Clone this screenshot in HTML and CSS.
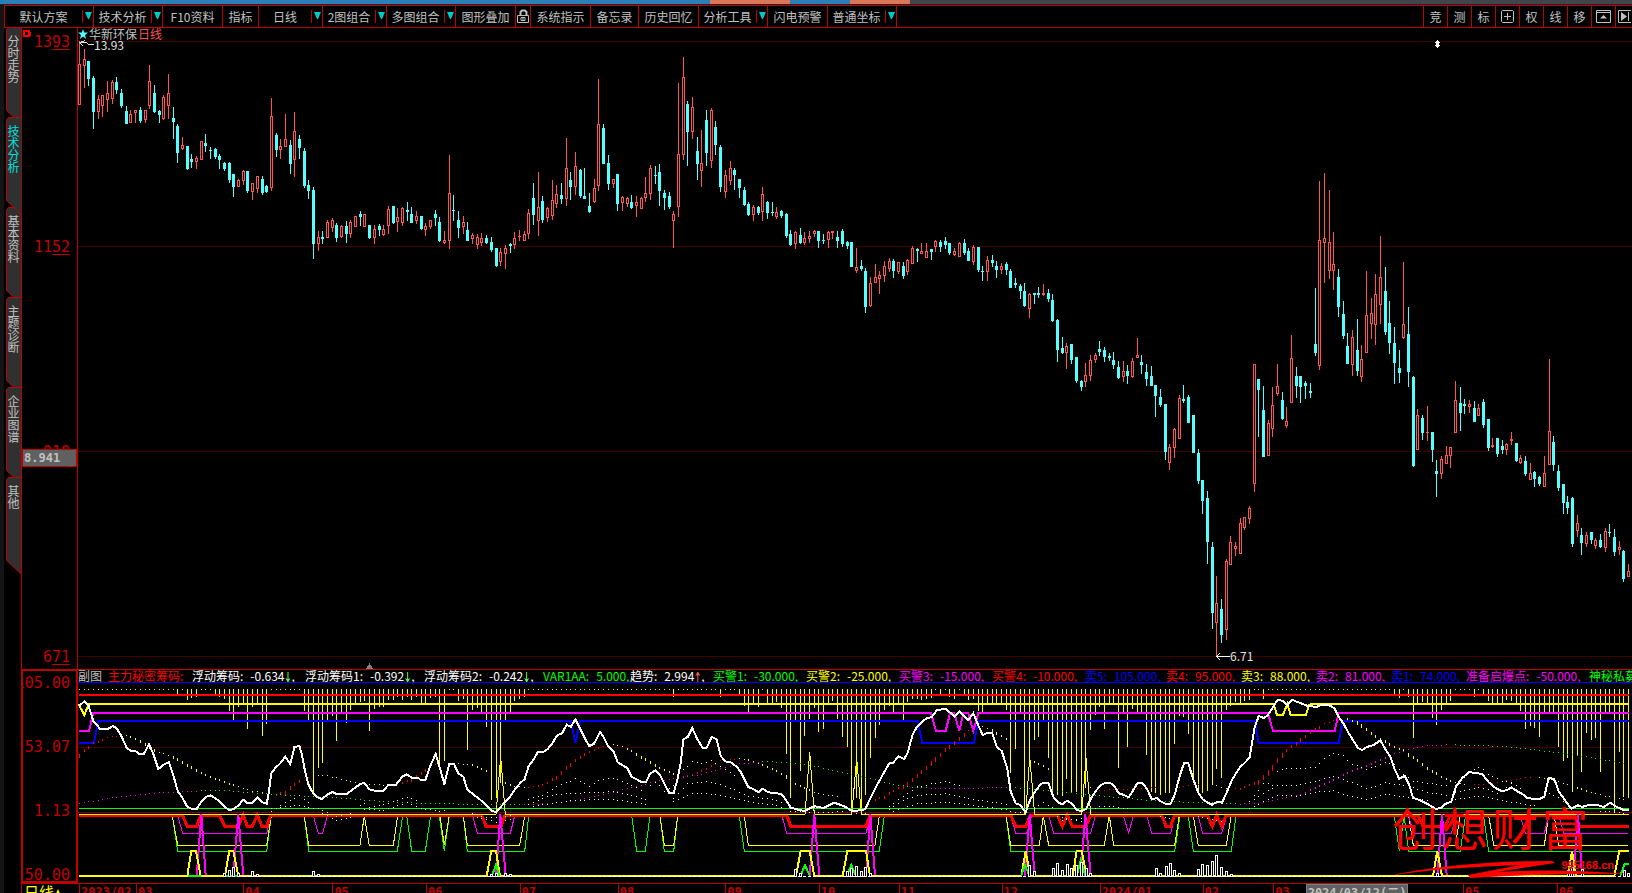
FILE: index.html
```html
<!DOCTYPE html>
<html lang="zh-CN">
<head>
<meta charset="utf-8">
<title>华新环保 日线</title>
<link rel="stylesheet" href="styles.css">
</head>
<body>
<div class="strip"><i class="blue s710"></i><i class="coral s80"></i><i class="blue s60"></i><i class="coral s60"></i><i class="slate"></i></div>
<div class="app">
  <nav class="toolbar" aria-label="工具栏">
    <button class="w89"><span>默认方案</span><i class="caret"></i></button>
    <button class="w69"><span>技术分析</span><i class="caret"></i></button>
    <button class="w60"><span>F10资料</span></button>
    <button class="w36"><span>指标</span></button>
    <button class="w64"><span>日线</span><i class="caret"></i></button>
    <button class="w64"><span>2图组合</span><i class="caret"></i></button>
    <button class="w69"><span>多图组合</span><i class="caret"></i></button>
    <button class="w60"><span>图形叠加</span></button>
    <button class="w15" aria-label="锁定"><svg width="12" height="15" viewBox="0 0 12 15" fill="none" stroke="#c0c0c0"><path d="M3.5 6V3L5 1.500H8L9.500 3V6.500" stroke-width="2"/><path d="M.5 6.500H11.500V13.500H.5z M4 8.500H8V11.500H4z M6 9V11"/></svg></button>
    <button class="w60"><span>系统指示</span></button>
    <button class="w48"><span>备忘录</span></button>
    <button class="w60"><span>历史回忆</span></button>
    <button class="w69"><span>分析工具</span><i class="caret"></i></button>
    <button class="w60"><span>闪电预警</span></button>
    <button class="w69"><span>普通坐标</span><i class="caret"></i></button>
    <span class="spacer"></span>
    <button class="w24"><span>竞</span></button>
    <button class="w24"><span>测</span></button>
    <button class="w24"><span>标</span></button>
    <button class="w24" aria-label="网格"><svg width="13" height="13" viewBox="0 0 13 13" fill="none" stroke="#c0c0c0"><path d="M1.500.5H11.500L12.500 1.500V11.500L11.500 12.500H1.500L.5 11.500V1.500z M6.500 3V10 M3 6.500H10"/></svg></button>
    <button class="w24"><span>权</span></button>
    <button class="w24"><span>线</span></button>
    <button class="w24"><span>移</span></button>
    <button class="w24" aria-label="收起"><svg width="15" height="13" viewBox="0 0 15 13" fill="none" stroke="#c0c0c0"><path d="M.5.5H14.500V12.500H.5z M1 2.500H14"/><path d="M4 8.500L7.500 5L11 8.500z" fill="#c0c0c0" stroke="none"/></svg></button>
    <button class="w16" aria-label="下一页"><svg width="13" height="13" viewBox="0 0 13 13" fill="none" stroke="#c0c0c0"><path d="M13 .5H.5V12.500H13 M10.500 2V11"/><path d="M3 2V11L9 6.500z" fill="#c0c0c0" stroke="none"/></svg></button>
  </nav>
  <main class="desk">
    <nav class="tabs" aria-label="页面">
      <button><span>分时走势</span></button>
      <button class="active"><span>技术分析</span></button>
      <button><span>基本资料</span></button>
      <button><span>主题诊断</span></button>
      <button><span>企业图谱</span></button>
      <button><span>其他</span></button>
    </nav>
    <div class="axis price-axis">
      <svg class="pin" width="9" height="9" viewBox="0 0 9 9"><path d="M0 0H7V2H8V6H7V7H0zM2 2V5H5V2z" fill="#f00" fill-rule="evenodd"/></svg>
      <span>13<u>93</u></span><span>11<u>52</u></span><span>918</span><span>6<u>71</u></span>
      <strong class="marker">8.941</strong>
    </div>
    <section class="price" aria-label="K线图">
      <svg id="price" viewBox="78 28 1554 641" preserveAspectRatio="none" shape-rendering="crispEdges"></svg>
      <h1><svg width="10" height="10" viewBox="0 0 10 10"><path d="M5 0L6.200 3.600H10L7 5.900L8.100 10L5 7.500L1.900 10L3 5.900L0 3.600H3.800z" fill="#54ffff"/></svg>华新环保<b>日线</b></h1>
    </section>
    <div class="axis ind-axis"><span>105.00</span><span>53.07</span><span>1.13</span><span>-50.00</span></div>
    <section class="indicator" aria-label="副图">
      <div class="legend">
        <span class="gray">副图</span><span class="red">主力秘密筹码:</span>
        <span>浮动筹码:<em>-0.634</em><i class="down"></i>,</span>
        <span>浮动筹码1:<em>-0.392</em><i class="down"></i>,</span>
        <span>浮动筹码2:<em>-0.242</em><i class="down"></i>,</span>
        <span class="green">VAR1AA:<em>5.000,</em></span>
        <span>趋势:<em>2.994</em><i class="up"></i>,</span>
        <span class="green">买警1:<em>-30.000,</em></span>
        <span class="yellow">买警2:<em>-25.000,</em></span>
        <span class="magenta">买警3:<em>-15.000,</em></span>
        <span class="red">买警4:<em>-10.000,</em></span>
        <span class="navy">卖5:<em>105.000,</em></span>
        <span class="red">卖4:<em>95.000,</em></span>
        <span class="yellow">卖3:<em>88.000,</em></span>
        <span class="magenta">卖2:<em>81.000,</em></span>
        <span class="navy">卖1:<em>74.000,</em></span>
        <span class="magenta">准备启爆点:<em>-50.000,</em></span>
        <span class="green">神秘私募</span>
      </div>
      <svg id="indicator" viewBox="78 682 1554 201" preserveAspectRatio="none" shape-rendering="crispEdges"></svg>
      <div class="brand"><div class="name"><span>创</span><span>想</span><span>财</span><span>富</span></div>
        <svg viewBox="0 0 240 18" width="240" height="18"><path d="M0 15Q70 1 160 1L163 3L105 12Q170 8 236 14Q160 13 78 18L76 15L128 5Q60 7 0 15z" fill="#f00"/></svg>
        <small>995168.cn</small></div>
    </section>
    <div class="period">日线<svg width="8" height="9" viewBox="0 0 8 9"><path d="M4 0L8 9H0z" fill="#ff0"/></svg></div>
    <div class="dates"><div id="months" class="months"></div><strong class="cursor">2024/03/12(二)</strong></div>
  </main>
</div>
<script src="chart.js"></script>
</body>
</html>
```

FILE: styles.css
```css
* { box-sizing: border-box; }
body {
  margin: 0;
  height: 100vh;
  overflow: hidden;
  display: flex;
  flex-direction: column;
  background: #000;
  color: #c0c0c0;
  font: 12px/12px "Noto Sans CJK SC", sans-serif;
}
button {
  margin: 0;
  padding: 0;
  border: 0;
  background: none;
  color: inherit;
  font: inherit;
}
em, i { font-style: normal; }

.strip { display: flex; height: 5px; border-bottom: 1px solid #202428; }
.blue { background: #2980b9; }
.coral { background: #d87858; }
.slate { background: #40444c; flex: 1; }
.s710 { width: 710px; }
.s80 { width: 80px; }
.s60 { width: 60px; }

.app {
  flex: 1;
  min-height: 0;
  display: flex;
  flex-direction: column;
  border-left: 4px solid #141414;
}

.toolbar {
  display: flex;
  height: 23px;
  border: solid #c00000;
  border-width: 1px 0 1px 1px;
}
.toolbar button {
  display: flex;
  align-items: center;
  justify-content: center;
  flex: none;
  border-right: 1px solid #c00000;
}
.toolbar button span { flex: 1; text-align: center; white-space: nowrap; }
.toolbar button:last-child { border-right: 0; }
.spacer { flex: 1; border-right: 1px solid #c00000; }
.w15 { width: 15px; }
.w16 { width: 16px; }
.w24 { width: 24px; }
.w36 { width: 36px; }
.w48 { width: 48px; }
.w60 { width: 60px; }
.w64 { width: 64px; }
.w69 { width: 69px; }
.w89 { width: 89px; }
.caret {
  width: 11px;
  height: 13px;
  border-left: 1px solid #c00000;
  background: #00c8c8;
  background-clip: content-box;
  padding: 2px 1px 4px 2px;
  clip-path: polygon(0 0, 1px 0, 1px 13px, 0 13px, 0 0, 3px 2px, 10px 2px, 7px 9px, 6px 9px, 3px 2px);
}

.desk {
  flex: 1;
  min-height: 0;
  display: grid;
  grid-template-columns: 17px 57px minmax(0, 1fr);
  grid-template-rows: minmax(0, 1fr) 214px 10px;
}

.tabs {
  grid-row: 1 / 4;
  display: flex;
  flex-direction: column;
  margin-top: -1px;
  padding-left: 2px;
}
.tabs button {
  position: relative;
  height: 90px;
  display: flex;
  justify-content: center;
  padding-top: 8px;
}
.tabs button.active { z-index: 1; color: #00e0e0; }
.tabs button span { position: relative; width: 12px; }
.tabs button svg { position: absolute; left: 0; top: 0; }

.axis {
  position: relative;
  display: flex;
  flex-direction: column;
  justify-content: space-between;
  align-items: flex-end;
  overflow: hidden;
  color: #c00000;
  font: 15px/20px "DejaVu Sans Mono", monospace;
}
.axis u { text-underline-offset: 2px; text-decoration-thickness: 1px; }
.price-axis { border: solid #c00000; border-width: 0 1px; padding: 4px 7px 2px; }
.price-axis .pin { position: absolute; left: 1px; top: 2px; }
.price-axis .marker {
  position: absolute;
  left: 0;
  right: 0;
  top: calc(66% - 2px);
  height: 18px;
  padding-left: 1px;
  border: 1px solid #c00000;
  background: #606060;
  color: #c0c0c0;
  font-size: 12px;
  line-height: 16px;
}
.ind-axis { border: 2px solid #c00000; padding: 6px 6px 0 0; line-height: 12px; }

.price { position: relative; }
.price > svg, .indicator > svg { display: block; width: 100%; height: 100%; }
.price h1 {
  position: absolute;
  left: 0;
  top: 0;
  margin: 0;
  display: flex;
  align-items: center;
  gap: 1px;
  font: 12px/12px "Noto Sans CJK SC", sans-serif;
}
.price h1 b { font-weight: normal; color: #ff5454; }
.note { font: 12px "Noto Sans CJK SC", sans-serif; fill: #e0e0e0; }

.indicator {
  position: relative;
  border-top: 1px solid #c00000;
  display: grid;
  grid-template-columns: minmax(0, 1fr);
  grid-template-rows: 12px minmax(0, 1fr);
}
.legend {
  display: grid;
  grid-template-columns: 30px 84px 113px 119px 119px 87px 83px 93px 93px 93px 93px 81px 75px 75px 75px 75px 123px auto;
  overflow-x: clip;
  white-space: nowrap;
  color: #fff;
}
.legend em { margin-left: 7px; }
.gray { color: #c0c0c0; }
.red { color: #f00; }
.green { color: #0f0; }
.yellow { color: #ff0; }
.magenta { color: #f0f; }
.navy { color: #00f; }
.up, .down {
  display: inline-block;
  width: 5px;
  height: 10px;
  margin: 0 1px;
  vertical-align: -1px;
  background: #ff5454;
  clip-path: polygon(0 4px, 2px 0, 3px 0, 5px 4px, 3px 3px, 3px 10px, 2px 10px, 2px 3px);
}
.down {
  background: #54ff54;
  clip-path: polygon(0 6px, 2px 10px, 3px 10px, 5px 6px, 3px 7px, 3px 0, 2px 0, 2px 7px);
}

.brand {
  position: absolute;
  right: 0;
  bottom: 0;
  width: 240px;
  height: 88px;
  color: #f00;
}
.brand .name {
  display: grid;
  grid-template-columns: repeat(4, 50px);
  padding-top: 6px;
  font: 46px/50px "Noto Sans CJK SC", sans-serif;
}
.brand svg { position: absolute; left: 0; bottom: 5px; }
.brand small { position: absolute; right: 18px; bottom: 12px; font: bold 11px/12px "Liberation Sans", sans-serif; }

.period, .dates { border-top: 1px solid #c00000; }
.period {
  border-left: 1px solid #c00000;
  padding-left: 2px;
  overflow: hidden;
  color: #ff0;
  font-size: 15px;
  line-height: 15px;
}
.dates { position: relative; overflow: hidden; padding-left: 1px; }
.months { display: flex; color: #c00000; font: bold 12px/16px "DejaVu Sans Mono", monospace; }
.months span { flex-basis: 0; min-width: 0; height: 16px; padding-left: 1px; border-left: 1px solid #c00000; }
.cursor {
  position: absolute;
  left: 79%;
  top: 0;
  height: 18px;
  padding: 0 1px;
  border: 1px solid #808080;
  background: #606060;
  font: bold 12px/16px "DejaVu Sans Mono", "Noto Sans CJK SC", monospace;
}
```

FILE: chart.js
```js
const NS = 'http://www.w3.org/2000/svg';
const COUNT = 332;
const STEP = 4.68;
const barX = i => Math.round(79 + STEP * i);

function add(parent, tag, attrs, text) {
  const node = document.createElementNS(NS, tag);
  for (const key in attrs) node.setAttribute(key, attrs[key]);
  if (text) node.textContent = text;
  parent.appendChild(node);
  return node;
}
const rect = (p, x, y, width, height, fill) => add(p, 'rect', { x, y, width, height, fill });

/* side tabs */
document.querySelectorAll('.tabs button').forEach(button => {
  const svg = document.createElementNS(NS, 'svg');
  svg.setAttribute('width', 16);
  svg.setAttribute('height', 99);
  add(svg, 'path', { d: 'M15.5 .5H2.5L.5 2.5V83.5L15.5 97.5z', fill: '#303030' });
  add(svg, 'path', { d: 'M15.5 .5H2.5L.5 2.5V83.5L15.5 97.5', fill: 'none', stroke: '#c00000' });
  button.prepend(svg);
});

/* Candles: direction (r up, c down), high, body top, body bottom, low.
   Each block has its own base line and number of ticks in a pixel. */
const blocks = [
  { base: 20, ticks: 2.8, data: `r60,123,237,237 r81,108,129,190 c115,115,165,185 c157,162,258,305 r210,221,258,277 r210,210,240,272 r171,204,224,258 r168,174,221,235 c160,174,196,207 c193,204,241,246
c241,255,291,291 r252,263,288,288 r252,252,260,288 c244,252,283,288 r252,252,280,288 r126,171,241,249 c182,204,258,260 c252,255,266,288 r210,215,277,280 r151,204,241,277
c244,274,286,333 c291,297,372,400 r328,350,361,364 c353,353,417,420 c375,389,398,414 r381,386,398,417 r339,339,392,392 c319,344,353,370 c356,364,367,389 c358,361,384,389
c375,381,392,417 c398,400,417,423 c398,400,448,456 c431,431,468,496 r445,448,468,468 r420,423,451,462 c423,423,479,484 r456,456,482,504 r437,437,473,484 c437,445,484,490
c462,465,482,484 r218,269,470,479 c316,322,364,384 r333,353,364,389 r263,333,355,355 c336,350,403,431 r258,311,392,440 c322,333,358,389 c358,367,465,470 c448,462,479,501` },
  { base: 50, ticks: 3, data: `c411,420,582,627 r543,561,582,603 c543,561,567,582 r510,516,564,564 r504,510,534,546 c519,525,564,576 r525,528,561,564 c513,528,552,579 r510,516,552,564 r498,498,531,531
c483,492,501,528 r492,492,531,531 c525,525,564,567 r525,537,564,582 c522,528,540,558 r525,537,555,558 r468,477,528,552 c468,468,519,522 r474,501,516,546 r471,474,519,528
c456,480,486,513 c471,492,519,519 r483,498,513,522 c498,498,537,540 r519,528,540,558 r510,510,531,537 c480,492,504,528 c501,516,573,576 r543,570,579,582 r315,429,573,597
c435,480,483,513 c483,510,534,564 r498,516,531,552 c516,540,573,573 r549,555,567,582 r552,561,585,597 r549,564,579,588 c555,564,579,582 c561,576,600,606 c594,594,648,651
r594,606,636,648 r585,594,612,657 c579,582,588,609 r546,564,585,597 r540,558,561,573 r543,552,573,573 r477,489,552,567 c399,444,495,525 r366,471,513,558 c438,453,510,519
r471,474,504,516 r390,450,498,510 r405,432,462,474 c399,435,447,462 r264,354,447,468 c366,390,411,450 r306,348,411,435 c357,360,438,444 c354,438,447,447 c429,468,486,489
r387,414,456,459 r87,222,408,423 c222,234,342,342 c315,339,402,420 r387,387,402,414 c372,372,462,483 r438,441,459,483 r441,444,462,471 c435,456,474,477 r438,456,468,501
r441,444,477,477 r381,429,444,456 r345,354,432,450 c348,375,378,402 c342,366,423,468 c420,429,444,480 c426,438,471,477 r483,492,513,594 r99,312,471,501 r21,81,315,330
c153,162,246,348 r141,171,246,267 c261,303,342,390 r240,339,363,411 c180,210,309,348 r174,180,333,354 c213,231,285,315 c285,291,411,426 r360,375,426,444 r333,354,393,405
c354,360,375,420 c387,387,414,444 c411,420,465,468 c456,462,495,498 r465,471,495,513 c468,471,489,495 r411,432,486,513 c453,456,489,507 c456,486,489,498 r471,486,501,507
c480,483,498,504 c489,492,558,564 c540,552,585,588 r543,546,582,597 c534,555,579,582 r546,564,579,585 r543,558,567,579` },
  { base: 170, ticks: 3, data: `r180,183,192,201 c183,183,213,234 c192,210,213,222 r183,186,210,234 r183,183,189,207 c183,201,213,234 c177,183,222,231 c213,216,228,237 c216,216,291,291 r234,291,303,309
c270,288,297,303 c294,303,411,429 r321,339,408,411 r282,321,339,339 r303,315,327,372 r273,288,318,336 r264,273,297,306 c267,273,303,324 r276,276,306,312 c276,288,318,327
r267,270,306,315 r228,234,282,282 c234,237,243,276 r219,243,252,252 r219,243,264,264 c237,237,246,270 r210,213,231,246 c210,216,231,246 c201,213,225,237 c219,219,249,255
r234,243,255,258 r216,219,261,261 c207,219,249,255 c234,243,273,273 r225,231,276,285 c231,231,300,306 c288,303,306,333 r258,270,306,333 c255,270,279,291 c273,288,300,324
r279,288,300,312 c276,282,300,315 c297,303,354,354 c324,339,345,354 c342,348,363,387 c339,363,408,411 r369,372,417,444 c369,369,375,402 c351,369,375,384 r342,369,375,378
c357,369,387,396 c372,390,453,456 c447,450,540,576 c501,534,549,552 r519,528,549,597 c522,522,570,582 c561,561,633,639 c630,633,651,663 r579,615,636,651 r555,570,618,633
r549,555,570,579 c513,537,546,558 c531,540,561,576 c549,558,564,573 c546,570,585,597 c573,591,624,627 r573,603,621,636 c585,603,618,642 r564,573,621,624` },
  { base: 160, ticks: 3, data: `r534,585,594,594 c585,606,615,642 c612,636,657,678 c618,648,678,678 c675,675,708,771 c687,711,735,741 c732,732,876,900 r852,861,909,930 r804,807,864,894 r705,714,837,837
c675,717,723,729 c705,711,789,789 c765,765,879,879 c867,879,963,972 c960,960,1023,1062 c993,1014,1146,1212 c1146,1161,1359,1407 r1248,1329,1389,1488 c1317,1347,1425,1449 r1197,1203,1410,1440
r1128,1146,1215,1215 r1146,1158,1167,1188 r1074,1089,1182,1182 r1071,1071,1104,1110 r1038,1044,1077,1092 r612,612,972,996 c657,657,690,831 c678,750,891,891 r780,789,888,888 r681,735,807,831
r612,678,702,708 c696,720,777,780 r741,783,798,804 r525,594,729,729 c621,648,678,714 c648,648,681,729 c663,669,678,717 c669,693,699,714 c384,552,579,588 r63,240,618,630
r39,234,249,369 r90,246,333,357 r216,312,333,390 c327,351,441,471 c423,462,528,537 c519,558,612,612 r510,531,615,648 c477,570,633,648 r555,597,651,666 r333,465,579,579
r414,459,492,537 r342,402,495,555 r228,351,435,492 c321,393,516,525 c423,489,549,582 c501,549,609,672 c570,624,639,669 r306,492,534,537 c441,522,636,681 c648,651,918,921
r747,765,870,870 c765,774,819,840 r738,816,819,843 c816,816,870,906 c900,933,942,1011 r888,897,942,957 r858,885,912,912 r861,861,888,924 r663,720,819,819 c681,729,759,813
c717,732,738,762 r720,732,741,759 c723,744,786,786 r732,744,768,768 c717,726,795,804 c777,777,864,873 r834,855,861,864 c834,834,882,891 c840,858,870,882 r849,852,870,885
r816,837,843,855 c849,849,903,906 r885,894,909,912 c888,903,942,948 r909,939,960,960 c933,936,957,981 c948,951,972,978 r888,939,981,981 r597,813,915,915 c828,846,915,933
c915,933,984,993 c972,972,1029,1062 c1008,1026,1044,1062 c1011,1014,1152,1161 r1065,1089,1113,1131 c1104,1125,1149,1185 r1116,1125,1152,1161 c1116,1116,1140,1152 r1134,1140,1158,1167 c1122,1140,1161,1164
r1104,1113,1164,1176 c1092,1116,1119,1131 c1107,1131,1176,1188 r1143,1161,1170,1185 c1170,1173,1257,1266 r1212,1233,1251,1251` }
];

const price = document.getElementById('price');
for (const y of [41, 246, 451, 656]) {
  rect(price, 78, y, 1554, 1, '#400000');
}
let index = 0;
for (const block of blocks) {
  for (const item of block.data.split(/\s+/)) {
    const [hi, top, bot, lo] = item.slice(1).split(',').map(v => Math.round(block.base + v / block.ticks));
    const x = barX(index++);
    const height = Math.max(1, bot - top);
    if (item[0] === 'c') {
      rect(price, x, hi, 1, lo - hi, '#54ffff');
      rect(price, x - 1, top, 3, height, '#54ffff');
    } else {
      if (top > hi) rect(price, x, hi, 1, top - hi, '#ff5454');
      if (lo > bot) rect(price, x, bot, 1, lo - bot, '#ff5454');
      rect(price, x - 1, top, 3, height, '#ff5454');
      if (height > 2) rect(price, x, top + 1, 1, height - 2, '#000');
    }
  }
}
const stroke = (p, d, color, width) =>
  add(p, 'path', { d, fill: 'none', stroke: color, 'stroke-width': width });
stroke(price, 'M85 40.500L80 42.500L83 46M80 42.500H86L89 44.500H94', '#e0e0e0', 1);
add(price, 'text', { x: 94, y: 50, class: 'note' }, '13.93');
stroke(price, 'M1220 653L1216.500 656.500L1220 660M1216.500 656.500H1230', '#fff', 1);
add(price, 'text', { x: 1230, y: 661, class: 'note' }, '6.71');
add(price, 'path', { d: 'M366 669L369.500 663L373 669z', fill: '#808080' });
add(price, 'path', { d: 'M1437 40h1l2 3h-1v2h1l-2 3h-1l-2-3h1v-2h-1z', fill: '#fff' });

/* Indicator pane, plotted in four panels A-D with three units to a pixel */
const pane = document.getElementById('indicator');
const origin = { A: 0, B: 400, C: 810, D: 1212 };
const BASE = 650;

function points(text) {
  let ox = 0;
  const out = [];
  for (const token of text.trim().split(/\s+/)) {
    if (token in origin) ox = origin[token];
    else {
      const [x, y] = token.split(',').map(Number);
      out.push([ox + x / 3, BASE + y / 3]);
    }
  }
  return out;
}
function line(color, width, text) {
  add(pane, 'polyline', {
    points: points(text).map(p => p[0].toFixed(1) + ',' + p[1].toFixed(1)).join(' '),
    fill: 'none', stroke: color, 'stroke-width': width
  });
}
/* one short mark under every bar, as tall as the curve moves in a bar */
function marks(color, text) {
  for (const part of text.split('/')) {
    const pts = points(part);
    for (let k = 0; k + 1 < pts.length; k++) {
      const [x1, y1] = pts[k], [x2, y2] = pts[k + 1];
      const slope = (y2 - y1) / (x2 - x1);
      for (let i = 0; i < COUNT; i++) {
        const x = barX(i);
        if (x < x1 - 1 || x >= x2 - 1) continue;
        const tall = color === '#fff' ? 1 : Math.max(1, Math.round(Math.abs(slope) * 4.68));
        rect(pane, x, Math.round(y1 + slope * (x - x1)) - 1, 1, tall, color);
      }
    }
  }
}

rect(pane, 78, 747, 1554, 1, '#400000');
rect(pane, 78, 812, 1554, 1, '#800000');
rect(pane, 78, 682, 1554, 1, '#00f');

/* hanging bars */
const hang = new Map();
for (const [x, y] of points(`A 533,132 562,150 576,145 589,141 646,136 658,141 673,148 688,183 700,210 715,171 730,160 742,237 757,171 772,160 784,258 799,221 913,183 925,210 940,425 955,354 967,340 982,210 997,197 1009,273 1024,188 1039,218 1054,180 1066,160 1081,155 1093,152 1108,243 1123,177 1135,171 1150,171 1165,150 1180,150 1192,141 1207,150 1222,148 1234,141 1249,141
B 20,141 34,150 49,141 64,160 76,160 91,144 106,141 118,360 133,333 175,152 190,148 202,300 217,180 232,175 244,188 259,231 274,450 289,445 301,400 316,210 331,188 343,152 358,148 373,141 820,141 961,141 1018,132 1033,168 1045,188 1060,160 1075,171 1102,160 1117,160 1129,157 1144,174 1159,312 1171,443 1186,210 1201,363 1216,258 1228,207 1243,174 1258,246
C 40,237 55,160 70,152 82,207 97,261 112,291 124,490 139,445 154,490 166,434 181,324 196,264 208,224 223,180 238,168 250,185 265,165 280,210 292,155 307,148 322,148 337,150 349,148 364,145 391,132 418,141 433,146 463,136 475,150 490,148 505,183 517,185 532,165 547,160 562,160 575,163 589,180 601,370 616,297 631,188 646,490 659,320 673,270 688,261 700,210 715,324 728,434 742,434 757,438 772,380 785,428 800,426 815,490 827,415 842,240 856,195 870,170 883,237 898,165 911,160 925,354 940,188 955,291 968,177 982,185 997,187 1010,315 1025,425 1040,430 1053,434 1067,430 1082,428 1093,282 1108,197 1123,202 1135,252 1150,390 1165,434 1178,428 1192,422 1207,404
D 13,357 28,384 43,180 58,168 71,157 86,160 101,152 113,150 155,146 547,132 562,144 590,141 604,264 619,160 634,157 648,165 662,204 676,225 690,180 704,160 718,153 788,141 815,136 830,152 845,160 857,160 871,165 885,150 898,153 913,160 927,183 940,237 955,228 970,234 985,261 998,185 1012,188 1027,188 1040,291 1054,333 1069,324 1082,425 1096,315 1111,366 1124,249 1138,270 1153,264 1166,366 1180,188 1194,185 1208,490 1222,306 1237,440 1250,445`)) {
  hang.set(Math.round((x - 79.3) / STEP), Math.round(y));
}
for (let i = 0; i < COUNT; i++) {
  const end = hang.get(i) || 690;
  rect(pane, barX(i), 689, 1, end - 689, '#ff0');
}

/* sell levels */
line('#f00', 2, 'A 236,135 D 1250,135');
line('#ff0', 2, 'A 236,163 253,195 266,162 D 185,162 195,195 213,195 226,162 236,195 281,195 292,165 300,162 1250,162');
line('#f0f', 2, 'A 236,243 267,243 280,189 C 363,189 378,243 407,243 420,190 433,190 448,243 460,190 475,190 490,243 505,189 D 168,189 183,243 368,243 380,189 1250,189');
line('#00f', 2, 'A 236,279 282,279 295,213 B 513,213 526,279 541,213 C 323,213 337,279 492,279 505,213 D 128,213 140,279 380,279 392,213 1250,213');
rect(pane, 79, 808, 1550, 1, '#0f0');

/* buy levels */
line('#0f0', 1, 'A 517,497 533,604 800,604 814,497 913,497 926,604 1192,604 1208,497 1220,497 1235,604 B 76,604 92,497 118,497 133,604 148,497 190,497 202,604 374,604 386,497 695,497 710,604 736,604 750,497 780,497 793,604 821,604 833,497 1018,497 1033,604 C 208,604 223,497 588,497 602,604 1094,604 1110,497 1135,497 1150,604 D 58,604 72,497 547,497 562,604 576,497 590,604 745,604 760,500 815,500 830,604 1248,604');
line('#ff0', 1, 'A 517,497 533,586 800,586 814,497 913,497 926,586 1080,586 1093,497 1108,586 1180,586 1193,497 B 120,497 133,586 148,497 190,497 202,586 359,586 374,497 780,497 793,586 821,586 833,497 1033,497 1045,586 C 195,586 208,497 588,497 602,586 688,586 700,497 716,586 883,586 898,497 911,586 1094,586 1108,497 1150,497 1165,586 D 43,586 58,497 590,497 604,586 730,586 745,497 830,497 845,586 997,586 1010,497 1027,497 1040,586 1248,586');
line('#f0f', 1, 'A 533,497 548,550 800,550 812,497 940,497 955,550 968,550 982,497 B 218,497 232,550 331,550 344,497 1146,497 1160,550 C 168,550 182,497 602,497 617,550 650,550 665,497 716,497 731,550 842,550 856,497 940,497 956,550 970,497 1010,497 1025,550 1082,550 1094,497 1165,497 1178,550 D 29,550 44,497 590,497 604,550 718,550 732,497 925,497 940,550 997,550 1010,497 1040,497 1055,550 1248,550');
line('#f00', 3, 'A 236,495 547,495 562,529 590,529 602,495 658,495 675,529 715,529 730,495 742,529 757,529 772,495 786,529 800,529 812,495 B 245,495 258,529 303,529 316,495 1160,495 1172,529 C 168,529 180,495 602,495 617,529 647,529 662,495 742,495 757,529 772,495 787,529 828,529 842,495 1055,495 1068,529 1082,529 1094,495 1192,495 1207,529 D 14,495 29,529 43,495 618,495 633,529 700,529 715,495 1088,495 1100,529 1250,529');
line('#ff0', 1, 'A 236,493.5 B 288,493.5 302,320 316,493.5 1215,493.5 1229,305 1243,493.5 C 125,493.5 140,325 154,493.5 647,493.5 659,320 674,493.5 815,493.5 828,325 842,493.5 D 1250,493.5');

/* curves */
marks('#f00', 'A 238,313 253,300 280,280 322,264 365,258 372,258 / A 826,436 856,424 885,400 913,385 940,381 / A 1165,407 1192,403 1222,392 1258,374 / B 7,400 35,388 76,358 92,348 118,341 135,340 / B 387,414 415,408 445,396 470,378 500,350 526,330 556,310 600,292 632,288 / B 850,381 880,374 905,362 935,347 963,333 1010,328 / C 195,449 222,440 250,422 280,407 322,374 365,335 393,308 420,285 448,264 475,243 500,236 / C 870,424 926,418 950,419 1050,413 / C 1108,414 1150,405 1175,404 / D 58,418 86,415 115,404 140,390 168,363 197,325 225,297 253,277 280,256 310,237 338,222 365,214 395,209 / D 775,407 830,403 870,396 927,387 960,382');
marks('#ff0', 'A 379,258 393,262 420,272 450,292 480,310 520,322 560,345 604,370 660,392 715,412 757,425 810,434 / A 955,377 980,379 1020,388 1070,400 1108,405 1160,407 / B 165,342 215,346 240,356 265,366 / B 300,385 316,398 345,410 380,415 / B 640,286 670,292 700,308 738,330 780,355 830,376 / B 1018,328 1045,330 1075,340 1117,358 1158,378 1188,402 C 10,427 40,435 85,442 / C 518,233 547,241 575,260 595,270 / C 674,338 700,350 725,363 / C 765,383 780,388 / C 828,410 850,416 / D 0,404 29,413 55,418 / D 408,208 437,218 463,238 493,260 520,275 547,290 577,302 604,323 648,355 690,382 732,400 770,406 / D 970,383 1010,390 1055,402 1098,415 1140,430 1180,440 1250,454');
marks('#f0f', 'A 238,461 280,455 350,443 420,435 475,430 533,427 600,424 / B 372,466 430,463 500,457 570,444 630,430 700,412 778,394 850,384 905,374 963,357 1020,342 1085,338 / C 365,417 448,418 530,415 600,415 / D 86,464 150,460 200,450 260,436 310,414 365,390 420,363 493,335 547,313 604,297 648,288 710,286');
marks('#0f0', 'A 604,424 690,424 742,429 814,434 870,438 940,441 1020,446 1108,453 B 62,462 150,463 260,466 370,466 / B 1088,337 1150,338 1220,345 C 40,356 97,370 180,387 250,405 307,413 360,416 / C 617,415 680,420 757,427 842,437 926,444 1010,452 1094,457 1207,460 D 80,464 / D 718,286 790,288 871,291 955,300 1040,310 1120,322 1180,332 1250,345');
marks('#fff', 'A 814,485 841,468 870,452 898,440 930,462 / A 814,478 860,470 900,468 945,480 / A 955,478 1010,500 1065,490 / A 965,492 1010,512 1065,502 / A 1073,470 1093,462 1108,475 1165,462 1222,443 B 55,455 / A 1093,480 1150,482 1222,460 B 62,478 120,485 140,480 / B 218,492 260,505 316,502 345,495 / B 230,505 290,518 345,508 / B 387,448 430,436 472,410 526,388 570,410 600,390 640,386 682,402 738,430 / B 387,464 440,440 500,432 560,430 640,426 700,440 740,452 / B 400,470 526,452 640,450 745,465 / B 740,412 766,400 795,425 821,405 850,360 877,335 908,342 935,334 976,362 1015,385 / B 821,445 863,402 920,396 976,410 1045,440 1117,450 1160,465 / B 821,455 877,433 920,432 990,443 1060,460 1117,465 1160,480 / B 1170,485 C 40,490 110,485 / C 110,495 180,490 / C 238,470 280,440 322,412 365,403 407,396 455,412 / C 238,478 280,452 322,438 407,433 475,448 560,460 595,466 / C 250,485 322,463 407,458 475,466 595,482 / C 595,485 650,492 / C 665,480 700,460 740,482 / C 740,502 842,520 / C 757,512 842,505 / C 842,485 870,470 920,472 960,480 / C 1050,502 1094,512 / C 1165,502 1250,520 / D 100,470 155,403 183,400 197,365 225,357 308,355 338,325 365,313 393,318 410,340 463,360 520,340 547,346 575,375 604,395 710,410 / D 115,455 197,407 253,408 308,395 365,381 420,400 463,418 520,400 590,410 640,428 710,440 / D 100,482 130,468 197,437 253,440 308,428 365,424 400,436 463,450 520,435 577,442 660,455 / D 732,405 775,366 803,352 830,375 871,395 898,400 930,420 / D 732,428 803,413 857,430 900,405 930,440 / D 732,450 803,440 870,453 940,465 980,470 / D 1010,430 1040,445 1070,470 / D 1160,485 1250,492');

line('#fff', 2, `A 238,168 253,154 266,168 280,213 300,236 325,236 338,228 350,235 364,258 380,293 392,302 406,303 418,312 432,311 447,282 460,312 475,357 490,345 506,336 520,375 533,423 547,443 562,470 576,477 590,477 604,455 618,441 631,436 645,444 658,453 674,471 688,480 700,478 715,467 730,449 742,460 757,458 772,443 786,457 800,461 806,430 814,370 826,354 841,340 856,320 871,343 883,292 898,287 906,315 913,353 925,403 940,431 955,443 966,447 982,434 997,426 1010,432 1040,432 1065,413 1080,403 1093,398 1108,418 1125,422 1150,423 1165,405 1188,404
B 7,380 20,373 35,383 55,384 62,390 76,390 92,345 107,312 120,355 133,403 148,342 162,342 175,370 190,380 202,418 218,432 233,443 250,457 262,468 275,482 288,487 303,470 316,455 330,440 345,418 360,400 374,387 386,348 400,330 414,305 430,306 444,296 458,278 472,256 486,250 500,224 512,231 526,208 540,235 556,268 568,288 582,281 600,246 612,263 625,290 640,303 653,337 668,346 682,354 695,380 710,388 725,397 738,396 750,371 766,361 780,374 795,405 808,429 821,429 833,385 842,340 850,268 863,261 877,234 892,268 908,293 920,293 935,261 950,268 962,318 976,334 992,337 1010,350 1022,365 1045,411 1060,417 1076,427 1088,416 1104,427 1125,429 1145,433 1158,450 1172,473 1190,478 1215,484
C 0,474 15,469 40,474 72,458 90,464 105,470 125,482 140,482 166,478 180,447 205,398 238,340 250,338 265,319 283,327 293,308 308,253 322,229 338,213 352,204 365,202 380,181 407,176 433,199 448,184 475,210 490,190 505,226 518,255 533,248 547,249 560,290 575,303 592,355 602,425 617,460 630,465 647,486 660,450 675,425 690,405 700,398 715,399 731,443 745,457 757,463 772,452 787,462 800,480 815,484 828,477 842,447 856,425 870,407 885,399 900,398 912,407 926,430 940,434 956,442 970,420 982,400 997,398 1012,418 1025,448 1040,444 1055,456 1068,462 1082,461 1094,434 1110,375 1122,340 1135,340 1150,388 1165,428 1178,448 1192,457
D 0,464 15,456 30,458 45,425 60,390 72,370 85,351 100,337 113,322 120,280 128,232 140,198 155,204 168,195 185,168 197,149 213,153 227,166 239,149 262,158 290,169 315,170 330,164 352,166 368,176 380,200 395,222 410,250 437,293 450,300 465,291 485,285 505,271 520,297 535,320 548,358 562,387 578,377 592,405 603,444 620,449 650,464 672,477 688,473 700,462 718,455 732,410 750,385 772,365 790,370 810,371 830,397 850,413 868,423 885,421 898,412 915,424 930,431 945,443 965,447 985,446 997,440 1010,383 1027,388 1040,424 1060,452 1078,476 1098,466 1110,471 1130,465 1155,465 1175,471 1195,458 1215,471 1235,480 1250,480`);

/* bottom signals */
for (const spike of ['A 590,677 604,493 617,677', 'A 700,677 715,493 730,677', 'B 288,677 301,493 317,677', 'B 1229,677 1243,493 1258,677', 'C 168,677 181,493 195,677', 'C 645,677 659,493 674,677', 'C 812,677 826,493 842,677', 'D 676,677 690,493 704,677', 'D 1085,677 1098,493 1110,677']) {
  line('#f0f', 2, spike);
}
line('#ff0', 2, 'A 236,678 562,678 574,603 588,603 602,678 675,678 688,603 700,603 715,678 B 260,678 274,603 288,603 300,678 1188,678 1202,603 1229,603 1243,678 C 98,678 112,603 168,603 180,678 634,678 647,603 660,678 788,678 800,603 815,603 830,678 D 663,678 676,603 690,678 1068,678 1080,603 1093,678 1207,678 1222,603 1250,603');
for (const hill of ['A 565,678 602,678', 'A 678,678 714,678', 'B 276,677 288,645 298,677', 'B 1202,677 1215,645 1229,677', 'C 110,677 124,645 138,677', 'C 634,677 645,645 658,677', 'C 800,677 812,630 826,677', 'D 1225,677 1238,642 1250,642']) {
  line('#0f0', 2, hill);
}
add(pane, 'path', { d: 'M243 876.5H1629', stroke: '#fff', 'stroke-dasharray': '3 2' });
for (const [x, y] of points('A 674,668 688,660 700,652 715,668 757,664 772,672 940,664 955,672 B 275,672 289,668 316,668 330,672 1187,658 1202,670 C 112,663 124,655 140,648 154,664 166,652 181,668 659,646 674,663 731,655 742,640 757,660 772,643 785,655 800,645 815,636 828,655 842,670 1040,655 1052,668 1068,648 1082,640 1094,660 1108,670 1165,657 1178,643 1192,646 1207,632 1220,616 D 28,650 43,664 58,672 676,670 1068,660 1080,652 1111,658 1237,660 1250,670')) {
  const px = Math.floor(x), top = Math.round(y);
  rect(pane, px - 1, top, 3, 877 - top, '#fff');
  rect(pane, px, top + 1, 1, 875 - top, '#000');
}

/* month axis: label and first bar */
const months = [['2023/02', 0], ['03', 12], ['04', 35], ['05', 54], ['06', 74], ['07', 94], ['08', 115], ['09', 138], ['10', 158], ['11', 175], ['12', 197], ['2024/01', 218], ['02', 240], ['03', 255], ['05', 296], ['06', 316]];
const box = document.getElementById('months');
months.forEach(([label, start], k) => {
  const span = document.createElement('span');
  const end = k + 1 < months.length ? months[k + 1][1] : COUNT;
  span.style.flexGrow = end - start;
  span.textContent = label;
  box.appendChild(span);
});
```
